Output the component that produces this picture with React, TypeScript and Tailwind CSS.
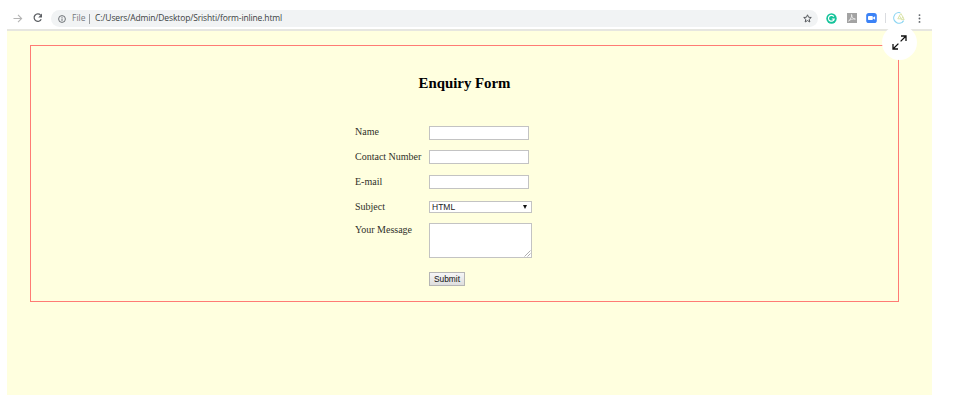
import type { ReactNode } from "react";

function Toolbar() {
  return (
    <header className="flex h-[31px] items-start border-b-2 border-[#e6e6e0] pt-[10px] font-['Open_Sans',sans-serif]">
      <svg className="mt-[4px] ml-[6px] h-[9px] w-[10px] shrink-0" viewBox="0 0 10 9" fill="none" stroke="#b4b4b4" strokeWidth="1.1">
        <path d="M0.5 4.5H8.6M5 0.9l3.6 3.6L5 8.1" />
      </svg>
      <svg className="mt-[3px] ml-[10px] h-[10px] w-[10px] shrink-0" viewBox="0 0 10 10">
        <path d="M7.6 2.2A3.7 3.7 0 1 0 8.2 6.2" fill="none" stroke="#5c5f63" strokeWidth="1.2" />
        <path d="M9 0.6v3.8H5.2z" fill="#5c5f63" />
      </svg>
      <div className="ml-[8px] flex h-[17px] w-[767px] shrink-0 items-center rounded-full bg-[#f1f3f4] pr-[6px] pl-[7px]">
        <svg className="h-[8px] w-[8px] shrink-0" viewBox="0 0 8 8">
          <circle cx="4" cy="4" r="3.4" fill="none" stroke="#5f6368" strokeWidth="0.9" />
          <path d="M4 3.5v2.4M4 1.9v0.9" stroke="#5f6368" strokeWidth="0.9" />
        </svg>
        <span className="ml-[6px] w-[14px] text-[8.5px] leading-none whitespace-nowrap text-[#777a7e]">File</span>
        <span className="ml-[3px] h-[10px] w-px bg-[#999c9f]" />
        <span className="ml-[5px] text-[8.5px] leading-none tracking-[-0.13px] whitespace-nowrap text-[#3c3f43]">
          C:/Users/Admin/Desktop/Srishti/form-inline.html
        </span>
        <svg className="ml-auto h-[9px] w-[9px] shrink-0" viewBox="0 0 10 10" fill="none" stroke="#54575b" strokeWidth="1.1">
          <path d="M5 0.9l1.2 2.7 3 .3-2.3 2 .7 3L5 7.3 2.4 8.9l.7-3-2.3-2 3-.3z" />
        </svg>
      </div>
      <svg className="mt-[3px] ml-[8px] h-[11px] w-[11px] shrink-0" viewBox="0 0 11 11">
        <circle cx="5.5" cy="5.5" r="5.2" fill="#15c39a" />
        <path d="M7.8 3.7A2.9 2.9 0 1 0 8.2 6H5.8" fill="none" stroke="#fff" strokeWidth="1.2" />
      </svg>
      <svg className="mt-[3px] ml-[10px] h-[10px] w-[10px] shrink-0" viewBox="0 0 10 10">
        <path d="M0 0h10v10H0z" fill="#a3a3a3" />
        <path d="M4.4 1.5c1.2 0 0 4-2.8 6.7 1.1-1.7 4.1-2.6 6.8-2.1C6 6 4.2 3.4 4.4 1.5z" fill="none" stroke="#f3f3f3" strokeWidth="0.8" />
      </svg>
      <svg className="mt-[3px] ml-[9px] h-[10px] w-[11px] shrink-0" viewBox="0 0 11 10">
        <rect x="0.2" width="10.6" height="10" rx="2.6" fill="#3b82f6" />
        <rect x="2" y="3" width="4.8" height="4" rx="0.8" fill="#fff" />
        <path d="M7.1 4.4l2-1.2v3.6l-2-1.2z" fill="#fff" />
      </svg>
      <span className="mt-[3px] ml-[8px] h-[10px] w-px shrink-0 bg-[#dadce0]" />
      <svg className="mt-[2px] ml-[7px] h-[12px] w-[12px] shrink-0" viewBox="0 0 12 12" fill="none">
        <path d="M7.4 0.8A5.3 5.3 0 1 0 10.6 8.6" stroke="#8bd5f2" strokeWidth="1.1" />
        <path d="M4.8 6.8l1.7-3.1 1.6 3.1zM6.4 3.8l1.5-2.2 2.4 4M8.2 7.6h3l-1.5-2.8z" stroke="#d8e2a4" strokeWidth="0.9" />
      </svg>
      <svg className="mt-[4px] ml-[13px] h-[9px] w-[3px] shrink-0" viewBox="0 0 3 9" fill="#5f6368">
        <circle cx="1.5" cy="1.1" r="0.95" />
        <circle cx="1.5" cy="4.5" r="0.95" />
        <circle cx="1.5" cy="7.9" r="0.95" />
      </svg>
    </header>
  );
}

type RowProps = { label: string; className: string; labelClass?: string; children: ReactNode };

function Row({ label, className, labelClass = "leading-[13px]", children }: RowProps) {
  return (
    <label className={`flex items-start ${className}`}>
      <span className={`w-[74px] shrink-0 text-[10px] whitespace-nowrap text-[#30302a] ${labelClass}`}>{label}</span>
      {children}
    </label>
  );
}

const field = "border border-[#c3c3c3] bg-white outline-none";

export default function App() {
  return (
    <div className="relative h-[412px] w-[976px] overflow-hidden bg-white font-['Liberation_Serif',serif]">
      <div className="ml-[7px] flex h-[395px] w-[925px] flex-col bg-[#ffffdf]">
        <div className="bg-white">
          <Toolbar />
        </div>
        <main className="mt-[14px] ml-[23px] h-[257px] w-[869px] border border-[#ff7b74]">
          <h1 className="mt-[28px] text-center text-[14.85px] leading-[18px] font-bold text-black">Enquiry Form</h1>
          <form className="mt-[34px] ml-[324px] flex w-[180px] flex-col">
            <Row label="Name" className="h-[24px]" labelClass="leading-[11px]">
              <input className={`h-[14px] w-[100px] ${field}`} />
            </Row>
            <Row label="Contact Number" className="h-[25px]">
              <input className={`h-[14px] w-[100px] ${field}`} />
            </Row>
            <Row label="E-mail" className="h-[26px]">
              <input className={`h-[14px] w-[100px] ${field}`} />
            </Row>
            <Row label="Subject" className="h-[22px]" labelClass="leading-[11px]">
              <div className={`flex h-[12px] w-[103px] items-center justify-between pr-[4px] pl-[2px] ${field}`}>
                <span className="font-['Liberation_Sans',sans-serif] text-[8.5px] leading-none text-[#222]">HTML</span>
                <svg className="h-[4px] w-[4px]" viewBox="0 0 4 4">
                  <path d="M0 0h4L2 4z" fill="#111" />
                </svg>
              </div>
            </Row>
            <Row label="Your Message" className="h-[49px]">
              <div className={`flex h-[35px] w-[103px] items-end justify-end ${field}`}>
                <svg className="h-[7px] w-[7px]" viewBox="0 0 7 7" stroke="#8d8d8d" strokeWidth="0.7">
                  <path d="M0.5 6.5l6-6M3.5 6.5l3-3" />
                </svg>
              </div>
            </Row>
            <button
              type="button"
              className="ml-[74px] h-[14px] w-[36px] border border-[#b5b5b5] bg-linear-to-b from-[#f6f6f6] to-[#dedede] text-center font-['Liberation_Sans',sans-serif] text-[8.4px] leading-[12px] text-[#111]"
            >
              Submit
            </button>
          </form>
        </main>
      </div>
      <button type="button" aria-label="Expand" className="absolute top-[25px] left-[882px] flex h-[35px] w-[35px] items-center justify-center rounded-full bg-white">
        <svg className="h-[15px] w-[15px]" viewBox="0 0 15 15" fill="none" stroke="#111" strokeWidth="1.3">
          <path d="M9 1h5v5M14 1L8.6 6.4M6 14H1V9M1 14l5.4-5.4" />
        </svg>
      </button>
    </div>
  );
}
